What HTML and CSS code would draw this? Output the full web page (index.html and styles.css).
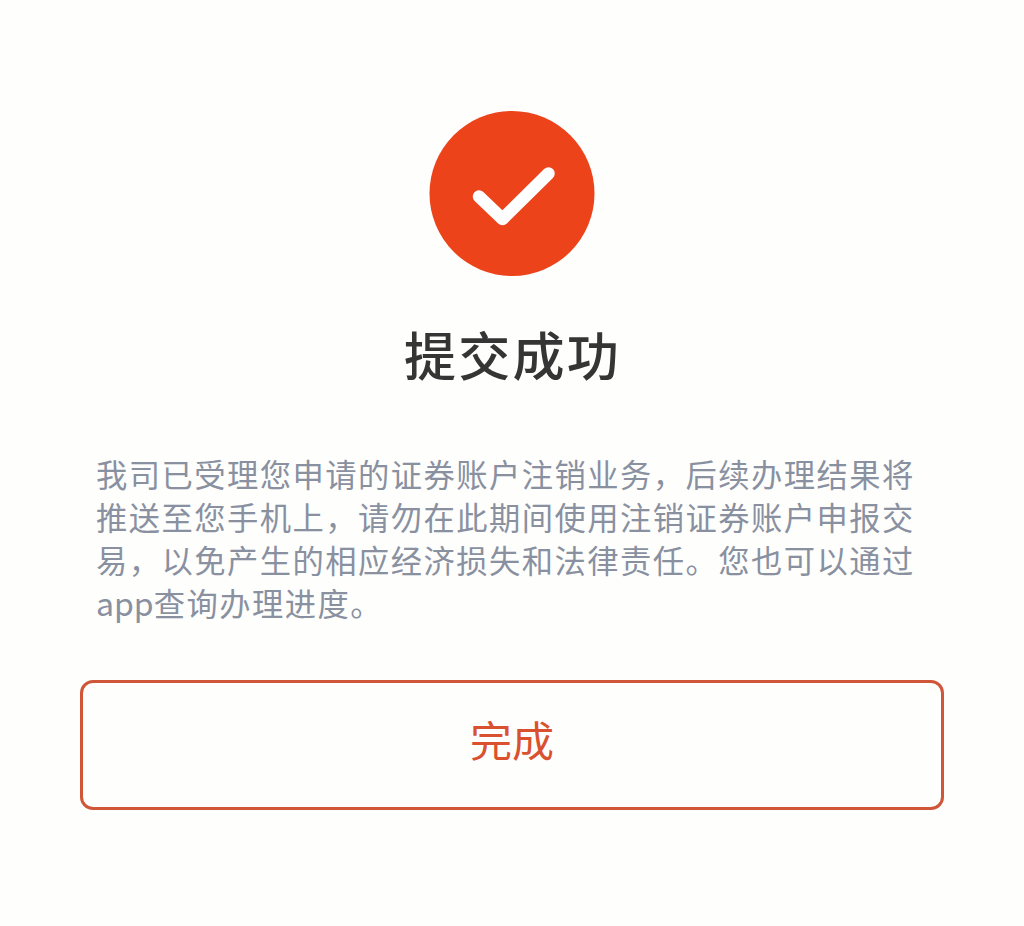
FILE: index.html
```html
<!DOCTYPE html>
<html lang="zh-CN">
<head>
    <meta charset="UTF-8">
    <meta name="viewport" content="width=device-width, initial-scale=1.0">
    <title>提交成功</title>
    <link rel="stylesheet" href="styles.css">
</head>
<body>
    <main class="result">
        <svg class="result-icon" viewBox="0 0 166 166" aria-hidden="true">
            <circle cx="83" cy="83.500" r="82.500" fill="#ed431b"/>
            <path d="M50 86.500 L73.500 109 L119.500 63.500" fill="none" stroke="#fff" stroke-width="12.500" stroke-linecap="round" stroke-linejoin="round"/>
        </svg>
        <h1>提交成功</h1>
        <p class="message">
            我司已受理您申请的证券账户注销业务，后续办理结果将<br>
            推送至您手机上，请勿在此期间使用注销证券账户申报交<br>
            易，以免产生的相应经济损失和法律责任。您也可以通过<br>
            <span class="latin">app</span>查询办理进度。
        </p>
        <button type="button">完成</button>
    </main>
</body>
</html>
```
FILE: styles.css
```css
body {
    margin: 0;
    background-color: #fefefd;
    font-family: "Noto Sans CJK SC", sans-serif;
}
.result {
    display: flex;
    flex-direction: column;
    align-items: center;
    padding: 110px 80px 0;
}
.result-icon {
    width: 166px;
    height: 166px;
}
h1 {
    margin: 38px 0 0;
    padding-left: 1px;
    color: #353535;
    font-size: 52px;
    font-weight: 500;
    line-height: 80px;
    letter-spacing: 2.2px;
}
.message {
    width: 832px;
    margin: 58px 0 0;
    color: #8990a0;
    font-size: 31.3px;
    line-height: 43px;
    letter-spacing: 1.45px;
    white-space: nowrap;
}
.latin {
    font-size: 32px;
    letter-spacing: 0;
}
button {
    width: 864px;
    height: 130px;
    margin-top: 56px;
    padding: 0 0 13px;
    border: 3px solid #cf5639;
    border-radius: 13px;
    background-color: transparent;
    color: #d9512f;
    font-family: inherit;
    font-size: 42px;
    cursor: pointer;
}
```
